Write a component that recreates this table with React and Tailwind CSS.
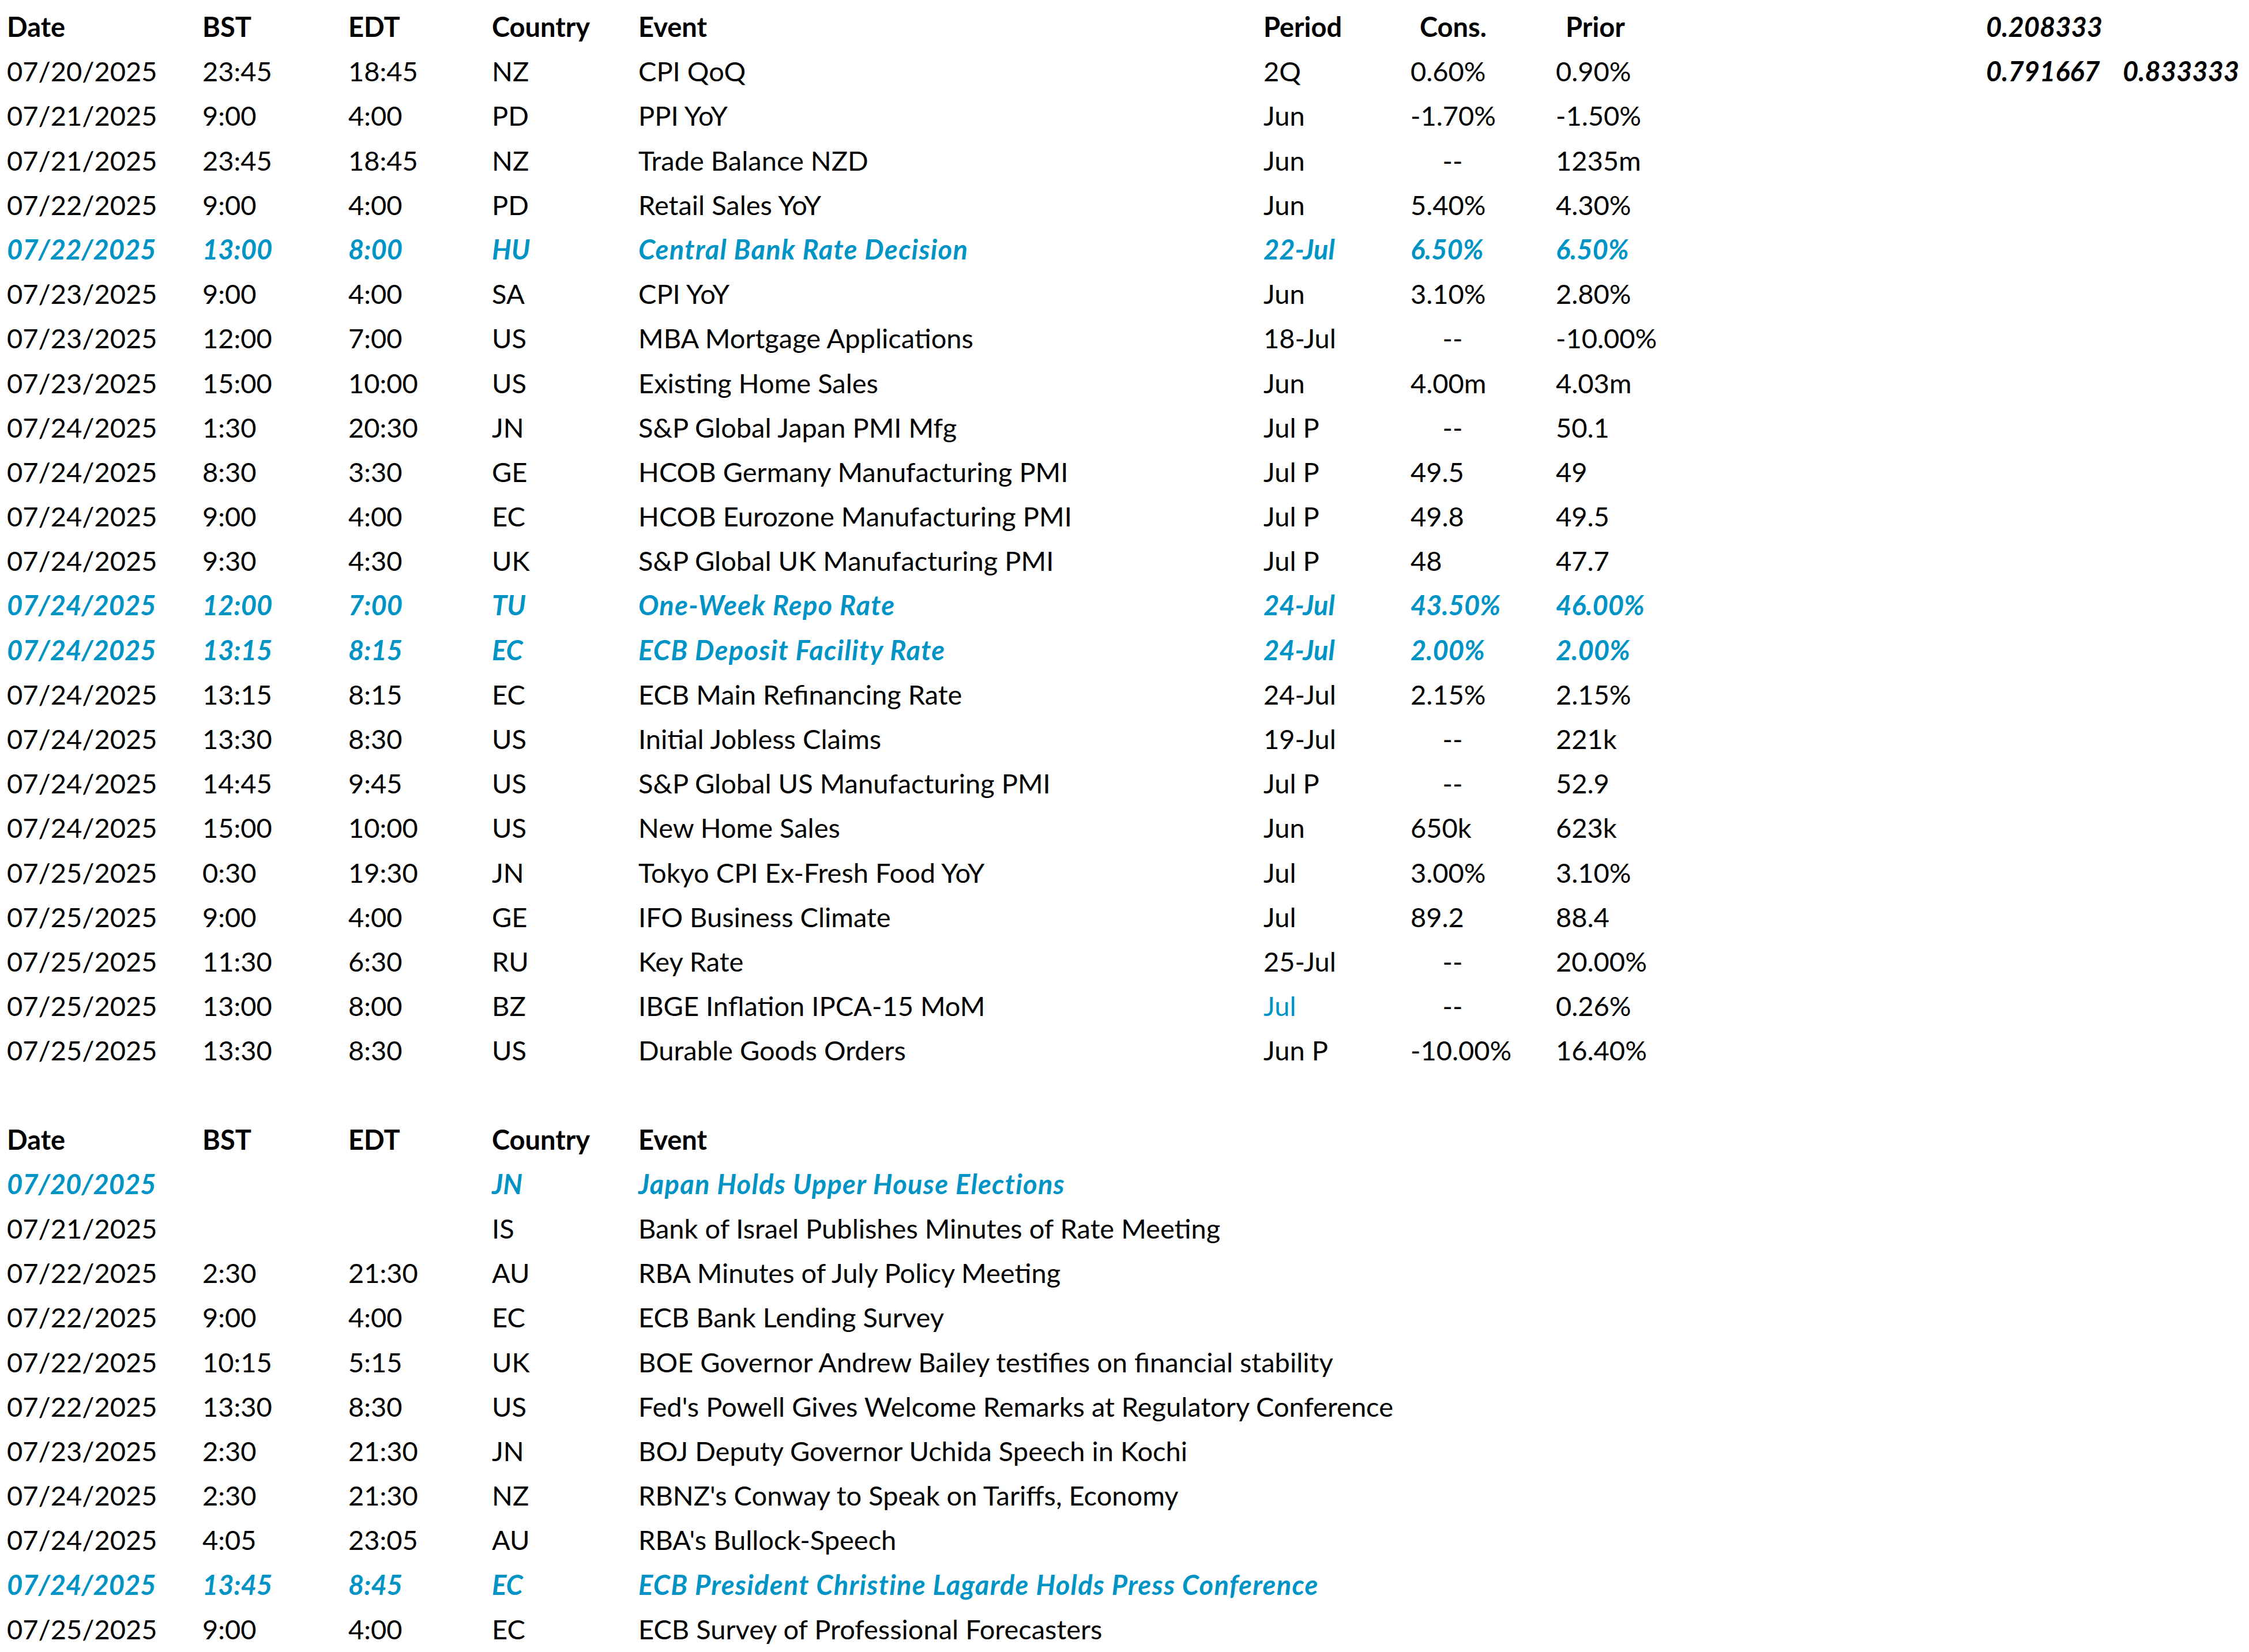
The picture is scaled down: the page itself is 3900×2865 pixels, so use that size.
import React from "react";

const BLUE = "text-[#0094c6]";

// top table: date, bst, edt, country, event, period, cons, prior
const releases = [
  ["07/20/2025", "23:45", "18:45", "NZ", "CPI QoQ", "2Q", "0.60%", "0.90%"],
  ["07/21/2025", "9:00", "4:00", "PD", "PPI YoY", "Jun", "-1.70%", "-1.50%"],
  ["07/21/2025", "23:45", "18:45", "NZ", "Trade Balance NZD", "Jun", "--", "1235m"],
  ["07/22/2025", "9:00", "4:00", "PD", "Retail Sales YoY", "Jun", "5.40%", "4.30%"],
  ["07/22/2025", "13:00", "8:00", "HU", "Central Bank Rate Decision", "22-Jul", "6.50%", "6.50%", true],
  ["07/23/2025", "9:00", "4:00", "SA", "CPI YoY", "Jun", "3.10%", "2.80%"],
  ["07/23/2025", "12:00", "7:00", "US", "MBA Mortgage Applications", "18-Jul", "--", "-10.00%"],
  ["07/23/2025", "15:00", "10:00", "US", "Existing Home Sales", "Jun", "4.00m", "4.03m"],
  ["07/24/2025", "1:30", "20:30", "JN", "S&P Global Japan PMI Mfg", "Jul P", "--", "50.1"],
  ["07/24/2025", "8:30", "3:30", "GE", "HCOB Germany Manufacturing PMI", "Jul P", "49.5", "49"],
  ["07/24/2025", "9:00", "4:00", "EC", "HCOB Eurozone Manufacturing PMI", "Jul P", "49.8", "49.5"],
  ["07/24/2025", "9:30", "4:30", "UK", "S&P Global UK Manufacturing PMI", "Jul P", "48", "47.7"],
  ["07/24/2025", "12:00", "7:00", "TU", "One-Week Repo Rate", "24-Jul", "43.50%", "46.00%", true],
  ["07/24/2025", "13:15", "8:15", "EC", "ECB Deposit Facility Rate", "24-Jul", "2.00%", "2.00%", true],
  ["07/24/2025", "13:15", "8:15", "EC", "ECB Main Refinancing Rate", "24-Jul", "2.15%", "2.15%"],
  ["07/24/2025", "13:30", "8:30", "US", "Initial Jobless Claims", "19-Jul", "--", "221k"],
  ["07/24/2025", "14:45", "9:45", "US", "S&P Global US Manufacturing PMI", "Jul P", "--", "52.9"],
  ["07/24/2025", "15:00", "10:00", "US", "New Home Sales", "Jun", "650k", "623k"],
  ["07/25/2025", "0:30", "19:30", "JN", "Tokyo CPI Ex-Fresh Food YoY", "Jul", "3.00%", "3.10%"],
  ["07/25/2025", "9:00", "4:00", "GE", "IFO Business Climate", "Jul", "89.2", "88.4"],
  ["07/25/2025", "11:30", "6:30", "RU", "Key Rate", "25-Jul", "--", "20.00%"],
  ["07/25/2025", "13:00", "8:00", "BZ", "IBGE Inflation IPCA-15 MoM", "Jul", "--", "0.26%"],
  ["07/25/2025", "13:30", "8:30", "US", "Durable Goods Orders", "Jun P", "-10.00%", "16.40%"],
];

const events = [
  ["07/20/2025", "", "", "JN", "Japan Holds Upper House Elections", true],
  ["07/21/2025", "", "", "IS", "Bank of Israel Publishes Minutes of Rate Meeting"],
  ["07/22/2025", "2:30", "21:30", "AU", "RBA Minutes of July Policy Meeting"],
  ["07/22/2025", "9:00", "4:00", "EC", "ECB Bank Lending Survey"],
  ["07/22/2025", "10:15", "5:15", "UK", "BOE Governor Andrew Bailey testifies on financial stability"],
  ["07/22/2025", "13:30", "8:30", "US", "Fed's Powell Gives Welcome Remarks at Regulatory Conference"],
  ["07/23/2025", "2:30", "21:30", "JN", "BOJ Deputy Governor Uchida Speech in Kochi"],
  ["07/24/2025", "2:30", "21:30", "NZ", "RBNZ's Conway to Speak on Tariffs, Economy"],
  ["07/24/2025", "4:05", "23:05", "AU", "RBA's Bullock-Speech"],
  ["07/24/2025", "13:45", "8:45", "EC", "ECB President Christine Lagarde Holds Press Conference", true],
  ["07/25/2025", "9:00", "4:00", "EC", "ECB Survey of Professional Forecasters"],
];

function Row({ children, className = "" }) {
  return (
    <div
      className={
        "grid h-[77.2px] grid-cols-[339px_253px_249px_254px_1084px_255px_252px_746px_237px_1fr] whitespace-nowrap pt-[15px] leading-[62.2px] " +
        className
      }
    >
      {children}
    </div>
  );
}

function Cons({ value }) {
  if (value === "--") {
    return (
      <div>
        <span className="inline-block w-[146px] text-center">--</span>
      </div>
    );
  }
  return <div>{value}</div>;
}

export default function App() {
  return (
    <div className="h-[2865px] w-full overflow-hidden bg-white pl-[12px] font-['Lato',sans-serif] text-[47px] text-black">
      <Row className="font-bold">
        <div>Date</div>
        <div>BST</div>
        <div>EDT</div>
        <div>Country</div>
        <div>Event</div>
        <div>Period</div>
        <div className="pl-[16px]">Cons.</div>
        <div className="pl-[17px]">Prior</div>
        <div className="italic">0.208333</div>
        <div />
      </Row>

      {releases.map((r, i) => {
        const hot = r[8];
        return (
          <Row key={i} className={hot ? `${BLUE} font-bold italic` : ""}>
            <div>{r[0]}</div>
            <div>{r[1]}</div>
            <div>{r[2]}</div>
            <div>{r[3]}</div>
            <div className={hot ? "tracking-[1.3px]" : ""}>{r[4]}</div>
            <div className={r[4].startsWith("IBGE") ? BLUE : ""}>{r[5]}</div>
            <Cons value={r[6]} />
            <div>{r[7]}</div>
            {i === 0 ? (
              <>
                <div className="font-bold italic">0.791667</div>
                <div className="font-bold italic">0.833333</div>
              </>
            ) : null}
          </Row>
        );
      })}

      <Row />

      <Row className="font-bold">
        <div>Date</div>
        <div>BST</div>
        <div>EDT</div>
        <div>Country</div>
        <div>Event</div>
      </Row>

      {events.map((e, i) => (
        <Row key={i} className={e[5] ? `${BLUE} font-bold italic` : ""}>
          <div>{e[0]}</div>
          <div>{e[1]}</div>
          <div>{e[2]}</div>
          <div>{e[3]}</div>
          <div className={"col-span-6" + (e[5] ? " tracking-[1.3px]" : "")}>{e[4]}</div>
        </Row>
      ))}
    </div>
  );
}
